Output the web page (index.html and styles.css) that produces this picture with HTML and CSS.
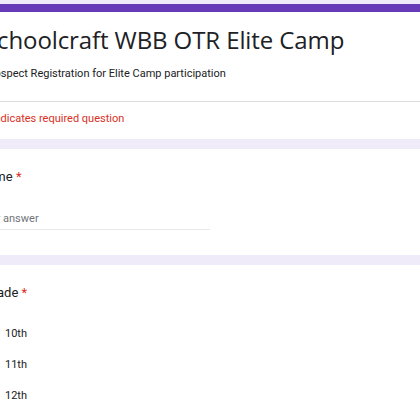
FILE: index.html
```html
<!DOCTYPE html>
<html lang="en">
<head>
<meta charset="utf-8">
<title>Schoolcraft WBB OTR Elite Camp</title>
<link rel="stylesheet" href="styles.css">
</head>
<body>
<main class="page">
  <section class="card header-card">
    <div class="header-main">
      <h1 class="form-title">Schoolcraft WBB OTR Elite Camp</h1>
      <p class="form-desc">Prospect Registration for Elite Camp participation</p>
    </div>
    <div class="header-required">* Indicates required question</div>
  </section>

  <section class="card question name-question">
    <div class="q-label">Name <span class="req">*</span></div>
    <div class="text-input"><span class="placeholder">Your answer</span></div>
  </section>

  <section class="card question">
    <div class="q-label">Grade <span class="req">*</span></div>
    <div class="options">
      <label class="option"><span class="radio"></span><span class="opt-text">10th</span></label>
      <label class="option"><span class="radio"></span><span class="opt-text">11th</span></label>
      <label class="option"><span class="radio"></span><span class="opt-text">12th</span></label>
    </div>
  </section>
</main>
</body>
</html>
```

FILE: styles.css
```css
html, body {
  margin: 0;
  padding: 0;
  background: #f0ebf8;
  overflow: hidden;
}

body {
  font-family: Roboto, "Liberation Sans", Arial, sans-serif;
  color: #202124;
}

.page {
  width: 640px;
  margin-left: -40px;
  padding-top: 4px;
  display: flex;
  flex-direction: column;
  gap: 10px;
}

.card {
  background: #ffffff;
  border-radius: 8px;
  padding-left: 24px;
}

.header-card {
  border-top: 8px solid #673ab7;
  padding-left: 0;
}

.header-main {
  padding: 12px 24px 19px 24px;
  border-bottom: 1px solid #dadce0;
}

.form-title {
  margin: 0;
  font-family: "Open Sans", Roboto, sans-serif;
  font-weight: 400;
  font-size: 24px;
  line-height: 32px;
  letter-spacing: -0.1px;
}

.form-desc {
  margin: 10px 0 0 0;
  font-size: 11px;
  line-height: 16px;
}

.header-required {
  padding: 9px 24px 12px 24px;
  font-size: 11px;
  line-height: 16px;
  color: #d93025;
}

.question {
  padding-top: 18px;
  padding-bottom: 25px;
}

.name-question {
  padding-left: 18px;
}

.q-label {
  font-size: 13px;
  line-height: 20px;
}

.req {
  color: #d93025;
}

.text-input {
  margin-top: 24px;
  width: 232px;
  padding-bottom: 2px;
  border-bottom: 1px solid #e8e8ea;
  font-size: 11px;
  line-height: 16px;
}

.placeholder {
  color: #70757a;
}

.options {
  margin-top: 23px;
  margin-left: -7px;
  display: flex;
  flex-direction: column;
  gap: 15px;
}

.option {
  display: flex;
  align-items: center;
  gap: 12px;
  font-size: 11px;
  line-height: 16px;
}

.radio {
  width: 16px;
  height: 16px;
  border: 2px solid #5f6368;
  border-radius: 50%;
  box-sizing: border-box;
}
```
